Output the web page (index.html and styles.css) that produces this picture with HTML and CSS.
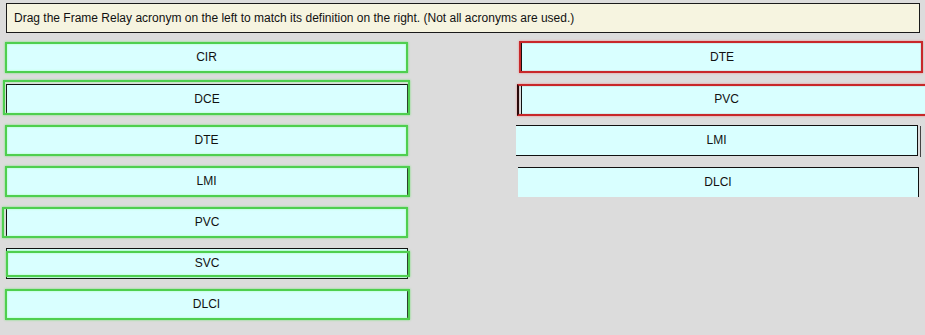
FILE: index.html
```html
<!DOCTYPE html>
<html lang="en">
<head>
    <meta charset="UTF-8">
    <title>Frame Relay Match</title>
    <link rel="stylesheet" href="styles.css">
</head>
<body>

<div class="prompt">Drag the Frame Relay acronym on the left to match its definition on the right. (Not all acronyms are used.)</div>

<div class="board">
    <div class="column sources">
        <div class="tile ok">CIR</div>
        <div class="tile ok shift-dce">DCE</div>
        <div class="tile ok">DTE</div>
        <div class="tile ok shift-right">LMI</div>
        <div class="tile ok shift-left">PVC</div>
        <div class="tile ok shift-svc">SVC</div>
        <div class="tile ok shift-right">DLCI</div>
    </div>

    <div class="column targets">
        <div class="tile bad wide">DTE</div>
        <div class="tile bad wide pvc">PVC</div>
        <div class="tile plain lmi">LMI</div>
        <div class="tile plain open">DLCI</div>
    </div>
</div>

</body>
</html>
```

FILE: styles.css
```css
body {
    margin: 0;
    background-color: #dcdcdc;
    font-family: Arial, "Liberation Sans", sans-serif;
    font-size: 12px;
    color: #111;
    width: 925px;
    height: 335px;
    overflow: hidden;
}

.prompt {
    box-sizing: border-box;
    margin: 3px 5px 0 6px;
    height: 30px;
    padding: 0 7px 1px;
    display: flex;
    align-items: center;
    background-color: #f6f4e0;
    border: 1px solid #1a1a1a;
}

.board {
    display: flex;
    gap: 110px;
    margin-top: 9px;
    padding-left: 5px;
}

.column {
    display: flex;
    flex-direction: column;
    gap: 10px;
}

.sources { width: 403px; }
.targets { width: 400px; }

.tile {
    position: relative;
    box-sizing: border-box;
    height: 31px;
    padding-bottom: 2px;
    display: flex;
    align-items: center;
    justify-content: center;
    background-color: #d9ffff;
    border: 1px solid #111;
}

.tile::after {
    content: '';
    position: absolute;
    top: -1px;
    left: -1px;
    right: -1px;
    bottom: -1px;
    pointer-events: none;
}

.tile.ok::after {
    border: 2px solid #4fcf4f;
    box-shadow: 0 0 2px rgba(90, 230, 90, 0.8), inset 0 0 2px rgba(150, 255, 150, 0.8);
}

.tile.bad::after {
    border: 2px solid #c8282a;
    box-shadow: 0 0 2px rgba(240, 130, 130, 0.9), inset 0 0 1px rgba(120, 20, 20, 0.8);
}

/* messy leftovers from dragging */
.shift-dce { margin-top: 1px; margin-left: 1px; width: 402px; height: 31px; }
.shift-dce::after { top: -5px !important; left: -4px !important; right: -3px !important; bottom: -1px !important; }

.shift-right::after { right: -3px !important; }

.shift-left { margin-left: 1px; width: 402px; }
.shift-left::after { left: -5px !important; }

.shift-svc { margin-left: 1px; width: 402px; }
.shift-svc::after { top: 2px !important; bottom: 1px !important; right: -3px !important; }

.targets .tile { margin-left: 3px; }

.wide { width: 402px; }
.wide::after { left: -3px !important; top: -2px !important; right: -1px !important; bottom: -1px !important; }

.pvc { width: 410px; margin-top: 1px; border-top: none; border-right: none; border-bottom: none; }
.pvc::after { left: -5px !important; top: 0 !important; right: -4px !important; bottom: -1px !important; border-left-color: #2a0a0a !important; }

.lmi { margin-left: -2px !important; width: 402px; border-left: none; }
.lmi::before {
    content: '';
    position: absolute;
    top: 0;
    bottom: -2px;
    right: -4px;
    width: 1px;
    background-color: #444;
}

.targets .open { margin-left: 0; width: 401px; border-left: none; border-bottom: none; margin-top: 1px; height: 30px; }
```
